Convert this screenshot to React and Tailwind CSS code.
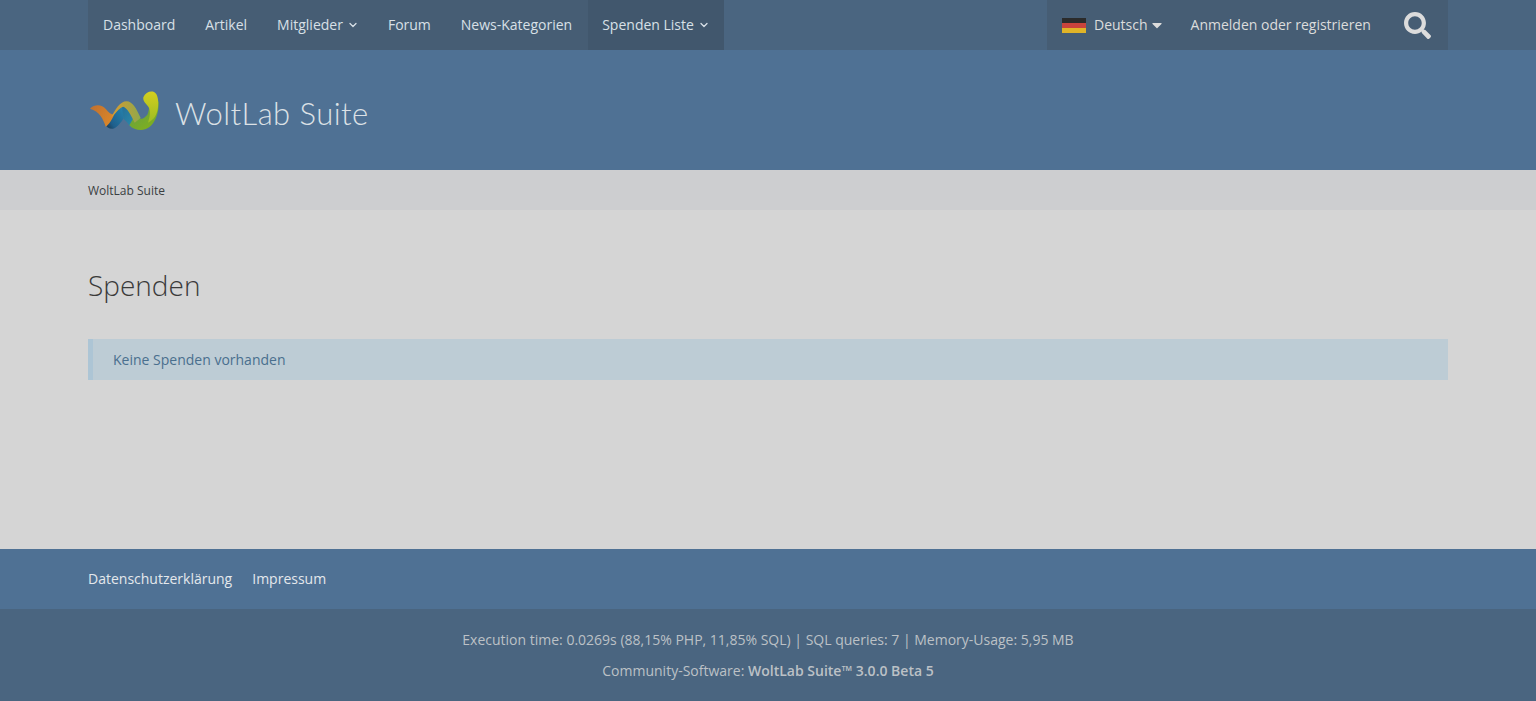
import React from 'react';
import { FaSearch, FaCaretDown } from 'react-icons/fa';
import { ChevronDown } from 'lucide-react';

const navItems = [
  { label: 'Dashboard', gap: 'mr-[30px]' },
  { label: 'Artikel', gap: 'mr-[30px]' },
  { label: 'Mitglieder', sub: true, gap: 'mr-[29px]' },
  { label: 'Forum', gap: 'mr-[30px]' },
  { label: 'News-Kategorien', gap: 'mr-[16px]' },
  { label: 'Spenden Liste', sub: true, active: true, gap: '' },
];

const Logo = () => (
  <svg width="76" height="46" viewBox="0 0 228 138" className="ml-[-2px] shrink-0">
    <defs>
      <linearGradient id="orange" x1="0" y1="0" x2="1" y2="0.6">
        <stop offset="0" stopColor="#c0702f" />
        <stop offset="1" stopColor="#d9862a" />
      </linearGradient>
      <linearGradient id="blue" x1="0" y1="1" x2="1" y2="0.2">
        <stop offset="0" stopColor="#1a2f42" />
        <stop offset="0.35" stopColor="#1f5f8c" />
        <stop offset="1" stopColor="#2580ac" />
      </linearGradient>
      <linearGradient id="crest" x1="0" y1="0" x2="1" y2="0">
        <stop offset="0" stopColor="#d99a30" />
        <stop offset="1" stopColor="#8fa94c" />
      </linearGradient>
      <linearGradient id="flank" x1="0" y1="0" x2="1" y2="1">
        <stop offset="0" stopColor="#256f98" />
        <stop offset="1" stopColor="#2a8cae" />
      </linearGradient>
      <linearGradient id="green" x1="0" y1="0" x2="0.7" y2="1">
        <stop offset="0" stopColor="#5f9a52" />
        <stop offset="1" stopColor="#7fb01c" />
      </linearGradient>
      <linearGradient id="lime" x1="0" y1="0" x2="0" y2="1">
        <stop offset="0" stopColor="#d4cf1e" />
        <stop offset="1" stopColor="#9cbc22" />
      </linearGradient>
    </defs>
    <path d="M56 108 C64 122 78 127 90 118 C99 110 106 102 112 92 L114 54 C96 60 84 78 72 88 C68 96 62 104 56 108Z" fill="url(#blue)" />
    <path d="M12 62 C28 47 48 50 60 64 C68 74 76 80 84 80 C78 96 68 110 59 116 C52 92 40 70 12 62Z" fill="url(#orange)" />
    <path d="M108 54 C124 56 136 82 148 104 L134 118 C126 106 120 98 112 92Z" fill="url(#flank)" />
    <path d="M130 112 L146 84 C156 94 168 96 178 86 C188 80 186 70 190 60 L218 40 C220 84 200 126 165 126 C150 126 140 122 130 112Z" fill="url(#green)" />
    <path d="M76 88 C88 64 102 40 122 40 C140 40 152 64 164 90 L146 104 C134 80 124 60 112 56 C100 58 88 78 76 88Z" fill="url(#crest)" />
    <path d="M172 28 C178 14 192 8 204 12 C216 18 218 38 216 58 C214 80 204 96 186 104 C192 86 194 70 188 58 C182 48 170 42 172 28Z" fill="url(#lime)" />
  </svg>
);

const App = () => {
  return (
    <div className="flex min-h-[701px] flex-col bg-[#d5d5d5] font-['Open_Sans','Noto_Sans',sans-serif] text-[14px]">
      {/* Top bar */}
      <div className="h-[50px] bg-[#4a6580]">
        <div className="mx-auto flex h-full w-[1360px] justify-between">
          <nav className="flex bg-[#465d74] pl-[15px]">
            {navItems.map((item) => (
              <a
                key={item.label}
                className={`flex items-center pb-[2px] text-[#d8e0e7] ${item.gap} ${
                  item.active ? 'bg-[#41576d] pl-[14px] pr-[14px]' : ''
                }`}
              >
                {item.label}
                {item.sub && <ChevronDown size={12} strokeWidth={2.6} className="ml-[4px] mt-[2px]" />}
              </a>
            ))}
          </nav>
          <div className="flex w-[401px] items-center bg-[#465d74] pl-[15px] text-[#dcdcdc]">
            <span className="flex h-[15px] w-[24px] flex-col">
              <span className="h-[5px] bg-[#2b2b2b]" />
              <span className="h-[5px] bg-[#c9433c]" />
              <span className="h-[5px] bg-[#e0b428]" />
            </span>
            <span className="ml-[8px] pb-[2px]">Deutsch</span>
            <FaCaretDown className="ml-[1px] text-[16px]" />
            <span className="ml-[26px] pb-[2px]">Anmelden oder registrieren</span>
            <FaSearch className="ml-[33px] text-[27px] text-[#dcdcdc]" />
          </div>
        </div>
      </div>

      {/* Logo */}
      <div className="h-[120px] bg-[#4f7194]">
        <div className="mx-auto flex h-full w-[1360px] items-start pt-[38px]">
          <Logo />
          <span className="ml-[13px] mt-[5px] font-['Lato',sans-serif] text-[31px] font-light leading-[40px] tracking-[0.45px] text-[#dce1e6]">
            WoltLab Suite
          </span>
        </div>
      </div>

      {/* Breadcrumb */}
      <div className="h-[40px] bg-[#cdced0]">
        <div className="mx-auto flex h-full w-[1360px] items-center pt-[2px] text-[12px] text-[#3a3f42]">WoltLab Suite</div>
      </div>

      {/* Content */}
      <main className="mx-auto h-[339px] w-[1360px] pt-[55px]">
        <h1 className="text-[28px] font-light leading-[40px] text-[#3a3a3a]">Spenden</h1>
        <p className="mt-[34px] flex h-[41px] items-center border-l-[5px] border-[#adc5d5] bg-[#bdccd5] pl-[20px] text-[#4a6f8e]">
          Keine Spenden vorhanden
        </p>
      </main>

      {/* Footer nav */}
      <div className="h-[60px] bg-[#4f7194]">
        <div className="mx-auto flex h-full w-[1360px] items-center gap-[20px] pb-[2px] text-[#e4e8ec]">
          <a>Datenschutzerklärung</a>
          <a>Impressum</a>
        </div>
      </div>

      {/* Copyright */}
      <footer className="flex h-[92px] flex-col items-center justify-center gap-[10px] bg-[#4a6580] leading-[21px] text-[#bcc1c6]">
        <p>Execution time: 0.0269s (88,15% PHP, 11,85% SQL) | SQL queries: 7 | Memory-Usage: 5,95 MB</p>
        <p>
          Community-Software: <strong className="font-semibold">WoltLab Suite™ 3.0.0 Beta 5</strong>
        </p>
      </footer>
    </div>
  );
};

export default App;
